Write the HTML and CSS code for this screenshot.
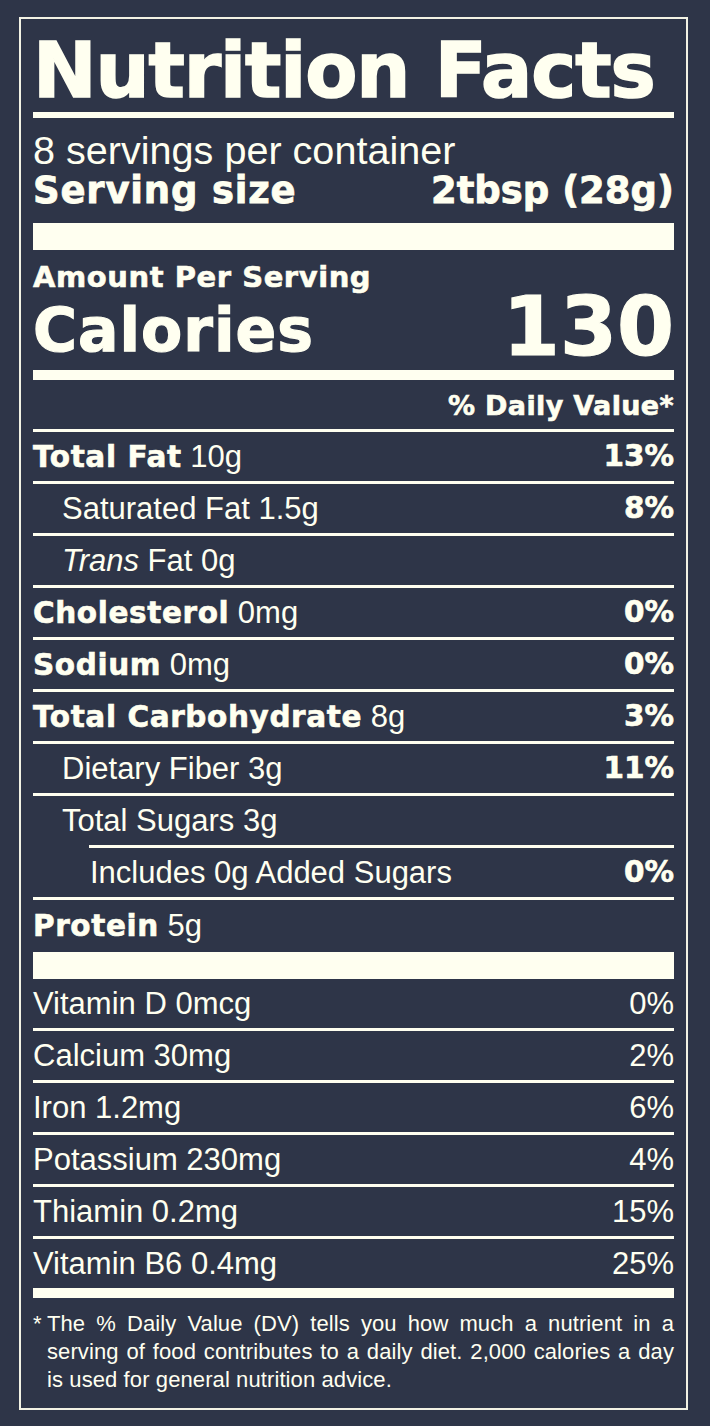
FILE: index.html
```html
<!DOCTYPE html>
<html lang="en">
<head>
    <meta charset="UTF-8">
    <meta name="viewport" content="width=device-width, initial-scale=1.0">
    <title>Nutrition Facts</title>
    <link rel="stylesheet" href="styles.css">
</head>
<body>
    <section class="label">
        <h1 class="title">Nutrition Facts</h1>
        <p class="servings">8 servings per container</p>
        <div class="serving-size">
            <span>Serving size</span>
            <span>2tbsp (28g)</span>
        </div>
        <div class="bar-thick"></div>

        <p class="amount">Amount Per Serving</p>
        <div class="calories">
            <span class="cal-label">Calories</span>
            <span class="cal-num">130</span>
        </div>
        <div class="bar-med cal-bar"></div>

        <div class="dv-head">% Daily Value*</div>
        <div class="rule"></div>

        <!-- nutrients -->
        <div class="row"><span><b class="n">Total Fat</b> 10g</span><b class="dv">13%</b></div>
        <div class="row indent"><span>Saturated Fat 1.5g</span><b class="dv">8%</b></div>
        <div class="row indent"><span><i>Trans</i> Fat 0g</span></div>
        <div class="row"><span><b class="n">Cholesterol</b> 0mg</span><b class="dv">0%</b></div>
        <div class="row"><span><b class="n">Sodium</b> 0mg</span><b class="dv">0%</b></div>
        <div class="row"><span><b class="n">Total Carbohydrate</b> 8g</span><b class="dv">3%</b></div>
        <div class="row indent"><span>Dietary Fiber 3g</span><b class="dv">11%</b></div>
        <div class="row indent open"><span>Total Sugars 3g</span></div>
        <div class="added-line"></div>
        <div class="row added"><span>Includes 0g Added Sugars</span><b class="dv">0%</b></div>
        <div class="row open protein"><span><b class="n">Protein</b> 5g</span></div>
        <div class="bar-thick vit-bar"></div>

        <!-- vitamins and minerals -->
        <div class="row"><span>Vitamin D 0mcg</span><span>0%</span></div>
        <div class="row"><span>Calcium 30mg</span><span>2%</span></div>
        <div class="row"><span>Iron 1.2mg</span><span>6%</span></div>
        <div class="row"><span>Potassium 230mg</span><span>4%</span></div>
        <div class="row"><span>Thiamin 0.2mg</span><span>15%</span></div>
        <div class="row open"><span>Vitamin B6 0.4mg</span><span>25%</span></div>
        <div class="bar-med"></div>

        <div class="note">
            <span class="star">*</span>
            <p class="note-text">The % Daily Value (DV) tells you how much a nutrient in a serving of food contributes to a daily diet. 2,000 calories a day is used for general nutrition advice.</p>
        </div>
    </section>
</body>
</html>
```

FILE: styles.css
```css
body {
    margin: 0;
    padding: 17px 0 16px 19px;
    background-color: #2e3548;
    color: #fffff0;
    font-family: 'Liberation Sans', Arial, sans-serif;
}
.label {
    width: 641px;
    border: 2px solid #f2f2e4;
    padding: 14px 12px;
}
.title {
    margin: 0;
    padding-bottom: 3px;
    border-bottom: 6px solid #fffff0;
    font-family: 'DejaVu Sans', sans-serif;
    font-weight: bold;
    font-size: 76px;
    line-height: 76px;
    letter-spacing: -1.1px;
    white-space: nowrap;
    -webkit-text-stroke: 1.6px #fffff0;
}
.servings {
    margin: 11px 0 0;
    font-size: 39.6px;
    line-height: 42px;
}
.serving-size {
    display: flex;
    justify-content: space-between;
    font-family: 'DejaVu Sans', sans-serif;
    font-weight: bold;
    font-size: 37px;
    line-height: 40px;
    -webkit-text-stroke: 0.8px #fffff0;
}
.serving-size span:first-child {
    letter-spacing: 0.8px;
}
.bar-thick {
    height: 27px;
    margin-top: 12px;
    background-color: #fffff0;
}
.amount {
    margin: 11px 0 0;
    font-family: 'DejaVu Sans', sans-serif;
    font-weight: bold;
    font-size: 29px;
    line-height: 32px;
    letter-spacing: 0.55px;
    -webkit-text-stroke: 0.6px #fffff0;
}
.calories {
    display: flex;
    justify-content: space-between;
    align-items: flex-end;
    font-family: 'DejaVu Sans', sans-serif;
    font-weight: bold;
    -webkit-text-stroke: 1.2px #fffff0;
}
.cal-label {
    font-size: 60px;
    line-height: 60px;
    letter-spacing: 1px;
}
.cal-num {
    font-size: 82px;
    line-height: 67px;
}
.bar-med {
    height: 10px;
    background-color: #fffff0;
}
.cal-bar {
    margin-top: 10px;
}
.dv-head {
    padding-top: 10px;
    text-align: right;
    font-family: 'DejaVu Sans', sans-serif;
    font-weight: bold;
    font-size: 27px;
    line-height: 32px;
    letter-spacing: 0.35px;
    -webkit-text-stroke: 0.6px #fffff0;
}
.rule {
    height: 3px;
    margin-top: 7px;
    background-color: #fffff0;
}
.row {
    display: flex;
    justify-content: space-between;
    height: 49px;
    line-height: 49px;
    border-bottom: 3px solid #fffff0;
    font-size: 31px;
    white-space: nowrap;
}
.row .n,
.row .dv {
    font-family: 'DejaVu Sans', sans-serif;
    font-weight: bold;
    font-size: 29.5px;
    letter-spacing: 0.6px;
    -webkit-text-stroke: 0.6px #fffff0;
}
.row .dv {
    letter-spacing: 0;
}
.indent {
    padding-left: 29px;
}
.open {
    border-bottom: none;
}
.added-line {
    height: 3px;
    margin-left: 56px;
    background-color: #fffff0;
}
.added {
    padding-left: 57px;
}
.protein {
    height: 52px;
    line-height: 52px;
}
.vit-bar {
    margin-top: 0;
}
.note {
    display: flex;
    margin-top: 12px;
    font-size: 22px;
    line-height: 28px;
    letter-spacing: 0.1px;
}
.star {
    flex: none;
    width: 14px;
}
.note-text {
    flex: 1;
    margin: 0;
    text-align: justify;
}
```
